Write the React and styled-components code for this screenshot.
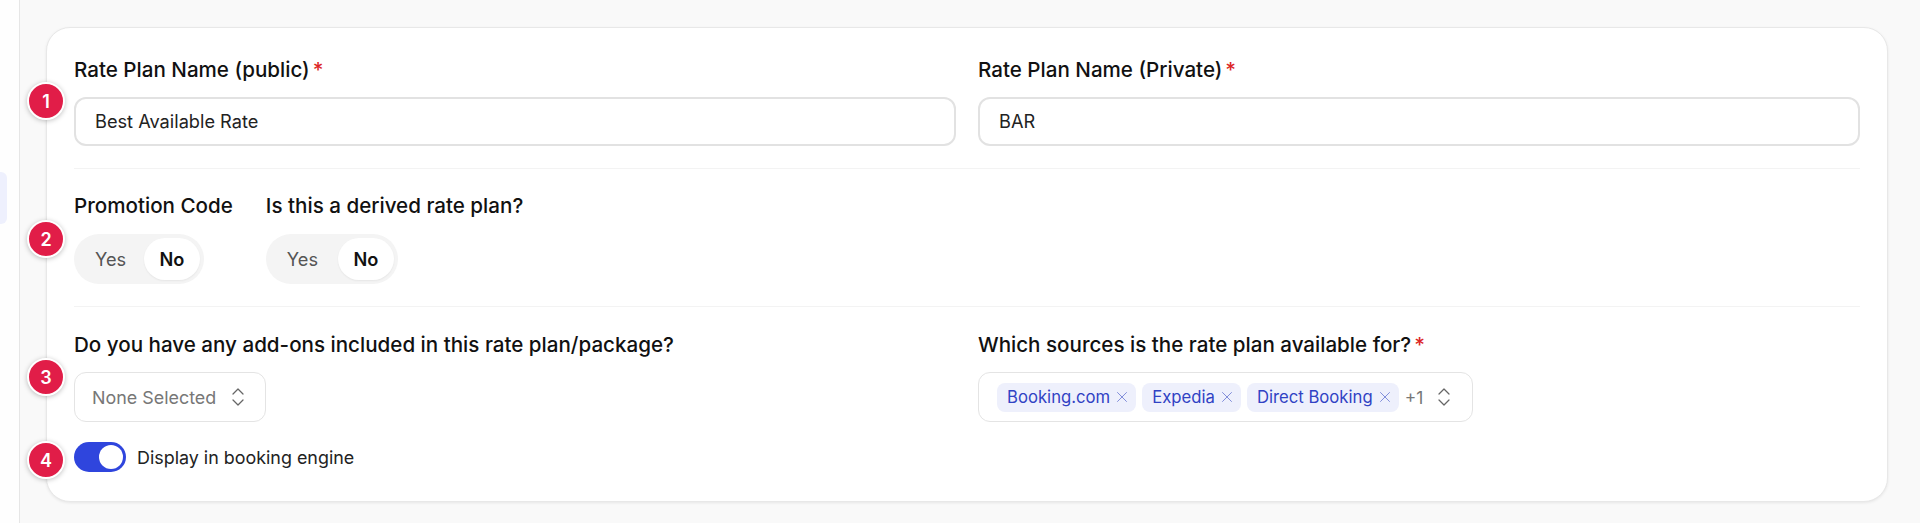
import React from "react";
import styled, { createGlobalStyle } from "styled-components";
import { ChevronsUpDown, X } from "lucide-react";

const Global = createGlobalStyle`
  html, body { margin: 0; padding: 0; background: #f9f9f9; }
  body { font-family: Inter, "Liberation Sans", sans-serif; color: #111; }
  * { box-sizing: border-box; }
`;

const Page = styled.div`
  display: flex;
  width: 1920px;
  height: 523px;
  overflow: hidden;
  background: #f9f9f9;
`;
const Sidebar = styled.aside`
  flex: 0 0 20px;
  background: #fefefe;
  border-right: 1px solid #e6e6e6;
  padding-top: 172px;
`;
const ActiveItem = styled.div`
  width: 7px;
  height: 52px;
  background: #eef0fd;
  border-radius: 0 6px 6px 0;
`;
const Main = styled.main`
  flex: 1;
  padding: 27px 32px 0 26px;
`;
const Card = styled.section`
  position: relative;
  height: 475px;
  background: #fff;
  border-radius: 24px;
  border: 1px solid #e8e8e8;
  box-shadow: 0 1px 3px rgba(0, 0, 0, 0.08);
  padding: 29px 27px 0 27px;
`;
const Badge = styled.div`
  position: absolute;
  left: -20px;
  top: ${(p) => p.$top}px;
  width: 38px;
  height: 38px;
  border-radius: 50%;
  background: #e11d48;
  border: 2px solid #fff;
  box-shadow: 0 1px 5px rgba(0, 0, 0, 0.25);
  color: #fff;
  font-size: 18px;
  font-weight: 600;
  display: flex;
  align-items: center;
  justify-content: center;
`;
const TwoCols = styled.div`
  display: grid;
  grid-template-columns: 882px 882px;
  column-gap: 22px;
`;
const Field = styled.div`
  display: flex;
  flex-direction: column;
  align-items: flex-start;
`;
const Label = styled.label`
  font-size: 20.6px;
  font-weight: 450;
  line-height: 26px;
  color: #111;
  margin-bottom: 14px;
  display: block;
`;
const Req = styled.span`
  color: #dc2626;
  margin-left: 3px;
`;
const TextInput = styled.div`
  width: 100%;
  height: 49px;
  border: 2px solid #e2e2e2;
  border-radius: 12px;
  padding: 0 19px 2px;
  display: flex;
  align-items: center;
  font-size: 18.2px;
  color: #222;
`;
const Divider = styled.hr`
  border: 0;
  border-top: 1px solid #f3f3f3;
  margin: ${(p) => p.$m || "22px 0 24px"};
`;
const Toggles = styled.div`
  display: flex;
  gap: 33px;
`;
const Segmented = styled.div`
  display: flex;
  align-items: center;
  justify-content: space-between;
  width: ${(p) => p.$w}px;
  height: 50px;
  margin-top: 1px;
  background: #f4f4f4;
  border-radius: 25px;
  padding: 4px 4px 4px 21px;
`;
const SegOff = styled.span`
  font-size: 18.2px;
  color: #555;
`;
const SegOn = styled.span`
  width: 56px;
  height: 42px;
  background: #fff;
  border-radius: 21px;
  box-shadow: 0 1px 2px rgba(0, 0, 0, 0.06);
  font-size: 18.2px;
  font-weight: 600;
  display: flex;
  align-items: center;
  justify-content: center;
`;
const Select = styled.div`
  display: inline-flex;
  align-items: center;
  height: 50px;
  border: 1px solid #e4e4e4;
  border-radius: 12px;
  padding: ${(p) => (p.$tags ? "0 16px 0 18px" : "0 15px 0 17px")};
  gap: ${(p) => (p.$tags ? 6 : 10)}px;
  font-size: 17.9px;
  color: #777;
  & > svg { color: #666; }
`;
const Tag = styled.span`
  display: inline-flex;
  align-items: center;
  gap: 3px;
  height: 29px;
  padding: 0 5px 0 10px;
  background: #eef0fc;
  border-radius: 8px;
  font-size: 16.7px;
  color: #3042c4;
  & > svg { color: #7b88d8; }
`;
const More = styled.span`
  font-size: 17.4px;
  color: #777;
  margin-right: 3px;
`;
const SwitchRow = styled.div`
  display: flex;
  align-items: center;
  gap: 11px;
  margin-top: 20px;
  font-size: 17.9px;
  color: #222;
`;
const Switch = styled.span`
  width: 52px;
  height: 30px;
  border-radius: 15px;
  background: #2f45dd;
  padding: 3px;
  display: flex;
  justify-content: flex-end;
`;
const Knob = styled.span`
  width: 24px;
  height: 24px;
  border-radius: 50%;
  background: #fff;
`;

export default function App() {
  return (
    <Page>
      <Global />
      <Sidebar><ActiveItem /></Sidebar>
      <Main>
        <Card>
          <Badge $top={54}>1</Badge>
          <Badge $top={192}>2</Badge>
          <Badge $top={330}>3</Badge>
          <Badge $top={413}>4</Badge>
          <TwoCols>
            <Field>
              <Label>Rate Plan Name (public)<Req>*</Req></Label>
              <TextInput>Best Available Rate</TextInput>
            </Field>
            <Field>
              <Label>Rate Plan Name (Private)<Req>*</Req></Label>
              <TextInput>BAR</TextInput>
            </Field>
          </TwoCols>
          <Divider />
          <Toggles>
            <Field>
              <Label>Promotion Code</Label>
              <Segmented $w={130}><SegOff>Yes</SegOff><SegOn>No</SegOn></Segmented>
            </Field>
            <Field>
              <Label>Is this a derived rate plan?</Label>
              <Segmented $w={132}><SegOff>Yes</SegOff><SegOn>No</SegOn></Segmented>
            </Field>
          </Toggles>
          <Divider $m="22px 0 25px" />
          <TwoCols>
            <Field>
              <Label>Do you have any add-ons included in this rate plan/package?</Label>
              <Select>None Selected<ChevronsUpDown size={24} strokeWidth={1.25} /></Select>
            </Field>
            <Field>
              <Label>Which sources is the rate plan available for?<Req>*</Req></Label>
              <Select $tags>
                <Tag>Booking.com<X size={18} strokeWidth={1.25} /></Tag>
                <Tag>Expedia<X size={18} strokeWidth={1.25} /></Tag>
                <Tag>Direct Booking<X size={18} strokeWidth={1.25} /></Tag>
                <More>+1</More>
                <ChevronsUpDown size={24} strokeWidth={1.25} />
              </Select>
            </Field>
          </TwoCols>
          <SwitchRow>
            <Switch><Knob /></Switch>
            Display in booking engine
          </SwitchRow>
        </Card>
      </Main>
    </Page>
  );
}
